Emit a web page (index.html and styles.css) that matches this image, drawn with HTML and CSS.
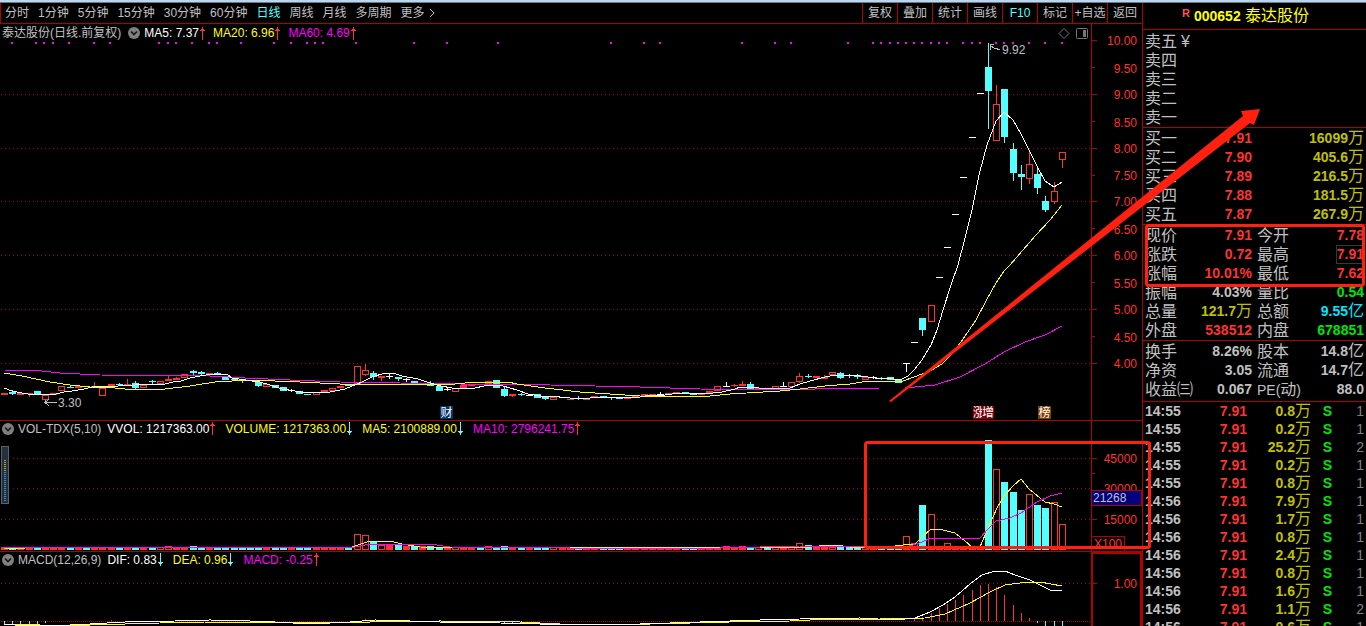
FILE: index.html
```html
<!DOCTYPE html>
<html lang="zh-CN">
<head>
<meta charset="utf-8">
<title>000652 泰达股份</title>
<link rel="stylesheet" href="styles.css">
</head>
<body>
<svg class="defs" aria-hidden="true">
  <symbol id="up" viewBox="0 0 5 13"><path d="M2 0h1v13H2z M1 2h3v1H1z M0 3h5v1H0z" fill="#ff3232"/></symbol>
  <symbol id="down" viewBox="0 0 5 13"><path d="M2 0h1v13H2z M1 10h3v1H1z M0 9h5v1H0z" fill="#54ffff"/></symbol>
  <symbol id="fold" viewBox="0 0 12 12"><circle cx="6" cy="6" r="6" fill="#808080"/><path d="M3 4.5l3 3 3-3" fill="none" stroke="#181818" stroke-width="1.7"/></symbol>
</svg>
<div class="app">
  <div class="window-edge"></div>
  <div class="workspace">
    <main class="charts">
      <nav class="toolbar">
        <div class="periods">
          <button>分时</button><button>1分钟</button><button>5分钟</button><button>15分钟</button><button>30分钟</button><button>60分钟</button><button class="active">日线</button><button>周线</button><button>月线</button><button>多周期</button><button class="more">更多<svg width="6" height="10" viewBox="0 0 6 10"><path d="M1 1l4 4-4 4" fill="none" stroke="#c0c0c0"/></svg></button>
        </div>
        <div class="tools">
          <button>复权</button><button>叠加</button><button>统计</button><button>画线</button><button class="active">F10</button><button>标记</button><button>+自选</button><button>返回</button>
        </div>
      </nav>

      <section class="panel">
        <header class="legend price-legend">
          <span>泰达股份(日线.前复权)</span>
          <svg class="fold"><use href="#fold"/></svg>
          <span class="white">MA5: 7.37<svg class="trend"><use href="#up"/></svg></span>
          <span class="yellow">MA20: 6.96<svg class="trend"><use href="#up"/></svg></span>
          <span class="magenta">MA60: 4.69<svg class="trend"><use href="#up"/></svg></span>
        </header>
        <svg class="plot" viewBox="0 24 1142 396">
          <g class="grid"><path d="M1 94.5H1091M1 148.5H1091M1 201.5H1091M1 255.5H1091M1 309.5H1091M1 363.5H1091"/></g>
          <path class="axis" d="M1091.5 24V420M1092 40.5h5M1092 67.5h3M1092 94.5h5M1092 121.5h3M1092 148.5h5M1092 175.5h3M1092 201.5h5M1092 228.5h3M1092 255.5h5M1092 282.5h3M1092 309.5h5M1092 336.5h3M1092 363.5h5"/>
          <g class="axis-text">
            <text x="1137" y="45">10.00</text><text x="1137" y="73">9.50</text><text x="1137" y="99">9.00</text><text x="1137" y="127">8.50</text><text x="1137" y="153">8.00</text><text x="1137" y="180">7.50</text><text x="1137" y="206">7.00</text><text x="1137" y="234">6.50</text><text x="1137" y="260">6.00</text><text x="1137" y="288">5.50</text><text x="1137" y="314">5.00</text><text x="1137" y="342">4.50</text><text x="1137" y="368">4.00</text>
          </g>
          <g id="events"></g>
          <g id="candles" class="crisp"></g>
          <polyline class="line magenta-line" points="4,370 42,371 60,373 100,375 210,376 245,378 290,380 340,382 400,383 460,384 550,385 640,387 700,389 790,390 815,389 880,388 905,388 935,385 960,377 985,364 1004,352 1025,342 1045,335 1062,326"/>
          <polyline class="line yellow-line" points="4,373 22,376 50,382 70,385 90,387 115,388 125,389 165,389 190,386 215,382 250,380 300,382 340,384 455,384 475,382 508,382 517,384 545,388 580,392 640,396 710,396 730,394 780,391 800,389 825,386 850,384 868,381 903,381 914,377 930,371 942,364 951,355 961,342 976,320 986,301 996,283 1004,271 1010,265 1036,235 1050,220 1062,205"/>
          <polyline class="line white-line" points="4,388 12,391 22,393 28,394 56,394 64,392 72,391 84,389 92,387 100,386 118,386 135,385 165,384 173,382 181,381 190,378 200,376 212,374 228,375 232,378 245,380 260,382 270,385 282,389 295,391 306,393 330,392 345,389 352,386 362,382 372,377 385,373 393,373 402,376 418,379 430,383 441,386 452,388 475,388 484,386 495,385 503,386 517,390 528,394 540,396 560,397 570,398 590,398 605,397 635,398 645,396 665,395 680,393 705,394 722,392 735,389 740,387 752,387 765,389 790,388 800,384 810,381 825,377 835,375 860,376 875,378 893,379 900,380 908,376 914,370 922,360 931,345 937,330 943,310 951,285 958,265 964,242 972,210 979,175 987,145 996,121 1004,112 1013,120 1021,134 1029,150 1037,166 1045,181 1054,187 1062,182"/>
          <path class="pointer" d="M1000 49.5l-5-1-5-3m0 4v-5h4M46 402.5h11M49 399.5l-4 3 4 3M45 400v3"/>
          <g class="note"><text x="1002" y="54">9.92</text><text x="58" y="407">3.30</text></g>
          <g class="badge">
            <rect x="440" y="406" width="13" height="13" fill="#003366"/><text x="446.5" y="417">财</text>
            <rect x="973" y="406" width="21" height="13" fill="#800000"/><text x="979" y="417">涨</text><rect x="982" y="406" width="12" height="13" fill="#800000"/><text x="988" y="417">增</text>
            <rect x="1038" y="406" width="13" height="13" fill="#804000"/><text x="1044.5" y="417">榜</text>
          </g>
          <path d="M1064 28.500l5 5-5 5-5-5z" fill="none" stroke="#777"/>
          <rect x="1076.500" y="28.500" width="11" height="10" rx="1" fill="none" stroke="#777"/><rect x="1083" y="30" width="3" height="7" fill="#777"/>
        </svg>
      </section>

      <section class="panel">
        <header class="legend">
          <svg class="fold"><use href="#fold"/></svg>
          <span>VOL-TDX(5,10)</span>
          <span class="white">VVOL: 1217363.00<svg class="trend"><use href="#up"/></svg></span>
          <span class="yellow">VOLUME: 1217363.00<svg class="trend"><use href="#down"/></svg></span>
          <span class="yellow">MA5: 2100889.00<svg class="trend"><use href="#down"/></svg></span>
          <span class="magenta">MA10: 2796241.75<svg class="trend"><use href="#up"/></svg></span>
        </header>
        <svg class="plot" viewBox="0 421 1142 130">
          <g class="grid"><path d="M13 458.5H1091M13 488.5H1091M1 519.5H1091"/></g>
          <path class="axis" d="M1091.5 421V551M1092 458.5h5M1092 473.500h3M1092 519.5h5"/>
          <g class="axis-text"><text x="1137" y="463">45000</text><text x="1137" y="493">30000</text><text x="1137" y="524">15000</text></g>
          <rect x="1091.5" y="490.5" width="50" height="15" fill="#000080" stroke="#b00000"/>
          <text class="current" x="1093" y="502">21268</text>
          <path class="axis" d="M1092 536.5h32.500v14"/>
          <text class="axis-text start" x="1094" y="548">X100</text>
          <g id="volumes" class="crisp"></g>
          <polyline class="line yellow-line" points="4,548 25,548 90,547 120,547 250,548 352,547 358,545 370,541 390,541 402,544 420,547 500,548 815,547 824,545 836,545 850,547 880,548 903,545 915,544 922,537 931,529 939,529 955,533 965,541 972,547 980,547 988,528 997,508 1004,496 1013,486 1021,479 1029,489 1045,502 1054,504 1062,507"/>
          <polyline class="line magenta-line" points="4,547 350,548 370,544 430,544 450,547 570,548 720,548 800,546 860,546 910,546 922,542 931,538 980,538 988,529 996,521 1010,518 1021,513 1037,502 1050,496 1062,493"/>
          <rect x="1.500" y="446.500" width="7" height="57" fill="#26303c" stroke="#59616b"/>
          <path d="M5 501V471" stroke="#3090d0" stroke-width="2" stroke-dasharray="1 1"/><path d="M5 471V459" stroke="#b0a030" stroke-width="2" stroke-dasharray="1 1"/>
        </svg>
      </section>

      <section class="panel">
        <header class="legend">
          <svg class="fold"><use href="#fold"/></svg>
          <span>MACD(12,26,9)</span>
          <span class="white">DIF: 0.83<svg class="trend"><use href="#down"/></svg></span>
          <span class="yellow">DEA: 0.96<svg class="trend"><use href="#down"/></svg></span>
          <span class="magenta">MACD: -0.25<svg class="trend"><use href="#up"/></svg></span>
        </header>
        <svg class="plot" viewBox="0 552 1142 74">
          <g class="grid"><path d="M1 583.5H1091"/><path class="zero" d="M1 621.5H1091"/></g>
          <path d="M1092 626V553H1141V626" fill="none" stroke="#b00000" stroke-width="2"/>
          <path class="axis" d="M1092 583.5h5"/>
          <text class="axis-text" x="1137" y="588">1.00</text>
          <g id="macd" class="crisp"></g>
          <polyline class="line yellow-line" points="4,624 40,625 90,625 160,623 205,622 300,622 370,622 440,621 520,622 560,624 650,624 730,622 790,621 830,619 880,619 925,618 945,614 970,603 990,592 1005,585 1020,583 1040,582 1062,586"/>
          <polyline class="line white-line" points="4,624 15,625 70,625 90,624 125,622 175,621 210,620 250,621 275,622 310,624 350,622 375,620 410,621 440,622 480,622 500,623 540,624 640,624 700,622 760,620 800,619 860,618 895,620 915,618 930,612 943,605 955,597 970,584 982,575 995,571 1005,571 1015,575 1030,580 1040,585 1050,590 1062,591"/>
        </svg>
      </section>
    </main>

    <aside class="sidebar">
      <h1 class="stock"><sup>R</sup><b>000652</b> 泰达股份</h1>
      <table class="book sell">
        <tr><th>卖五<span class="yen">¥</span></th><td></td><td></td></tr>
        <tr><th>卖四</th><td></td><td></td></tr>
        <tr><th>卖三</th><td></td><td></td></tr>
        <tr><th>卖二</th><td></td><td></td></tr>
        <tr><th>卖一</th><td></td><td></td></tr>
      </table>
      <table class="book">
        <tr><th>买一</th><td class="red">7.91</td><td class="gold">16099<i>万</i></td></tr>
        <tr><th>买二</th><td class="red">7.90</td><td class="gold">405.6<i>万</i></td></tr>
        <tr><th>买三</th><td class="red">7.89</td><td class="gold">216.5<i>万</i></td></tr>
        <tr><th>买四</th><td class="red">7.88</td><td class="gold">181.5<i>万</i></td></tr>
        <tr><th>买五</th><td class="red">7.87</td><td class="gold">267.9<i>万</i></td></tr>
      </table>
      <table class="quote">
        <tr><th>现价</th><td class="red">7.91</td><th>今开</th><td class="red">7.78</td></tr>
        <tr><th>涨跌</th><td class="red">0.72</td><th>最高</th><td class="red"><span class="boxed">7.91</span></td></tr>
        <tr><th>涨幅</th><td class="red">10.01%</td><th>最低</th><td class="red">7.62</td></tr>
        <tr><th>振幅</th><td>4.03%</td><th>量比</th><td class="green">0.54</td></tr>
        <tr><th>总量</th><td class="gold">121.7<i>万</i></td><th>总额</th><td class="blue">9.55<i>亿</i></td></tr>
        <tr><th>外盘</th><td class="red">538512</th><th>内盘</th><td class="green">678851</td></tr>
      </table>
      <table class="quote basics">
        <tr><th>换手</th><td>8.26%</td><th>股本</th><td>14.8<i>亿</i></td></tr>
        <tr><th>净资</th><td>3.05</td><th>流通</th><td>14.7<i>亿</i></td></tr>
        <tr><th>收益㈢</th><td>0.067</td><th><span class="latin">PE(</span>动<span class="latin">)</span></th><td>88.0</td></tr>
      </table>
      <table class="ticks">
        <tr><td>14:55</td><td>7.91</td><td>0.8<i>万</i></td><td>S</td><td>1</td></tr>
        <tr><td>14:55</td><td>7.91</td><td>0.2<i>万</i></td><td>S</td><td>1</td></tr>
        <tr><td>14:55</td><td>7.91</td><td>25.2<i>万</i></td><td>S</td><td>2</td></tr>
        <tr><td>14:55</td><td>7.91</td><td>0.2<i>万</i></td><td>S</td><td>1</td></tr>
        <tr><td>14:55</td><td>7.91</td><td>0.8<i>万</i></td><td>S</td><td>1</td></tr>
        <tr><td>14:56</td><td>7.91</td><td>7.9<i>万</i></td><td>S</td><td>1</td></tr>
        <tr><td>14:56</td><td>7.91</td><td>1.7<i>万</i></td><td>S</td><td>1</td></tr>
        <tr><td>14:56</td><td>7.91</td><td>0.8<i>万</i></td><td>S</td><td>1</td></tr>
        <tr><td>14:56</td><td>7.91</td><td>2.4<i>万</i></td><td>S</td><td>1</td></tr>
        <tr><td>14:56</td><td>7.91</td><td>0.8<i>万</i></td><td>S</td><td>1</td></tr>
        <tr><td>14:56</td><td>7.91</td><td>1.6<i>万</i></td><td>S</td><td>1</td></tr>
        <tr><td>14:56</td><td>7.91</td><td>1.1<i>万</i></td><td>S</td><td>2</td></tr>
        <tr><td>14:56</td><td>7.91</td><td>0.6<i>万</i></td><td>S</td><td>1</td></tr>
      </table>
    </aside>
  </div>
  <svg class="markup" viewBox="0 0 1366 626" aria-hidden="true">
    <path d="M889 401L1243 116L1241 111L1260 109L1254 125L1250 123L891 402Z" fill="#ff2010"/>
    <g fill="none" stroke="#ff2010" stroke-width="3">
      <rect x="865.5" y="442.5" width="284" height="105" rx="2"/>
      <rect x="1146.5" y="225.5" width="217" height="60" rx="2"/>
    </g>
  </svg>
</div>
<script src="chart.js"></script>
</body>
</html>
```

FILE: styles.css
```css
* { box-sizing: border-box; }
body {
  margin: 0;
  background: #000;
  color: #c0c0c0;
  font: 12px/16px "Liberation Sans", "Noto Sans CJK SC", sans-serif;
}
.defs { position: absolute; width: 0; height: 0; }
.app {
  position: relative;
  display: flex;
  flex-direction: column;
  height: 100vh;
  overflow: hidden;
}
.window-edge {
  flex: none;
  height: 3px;
  background: #b9d6f2;
  border-bottom: 1px solid #777;
}
.workspace {
  flex: 1;
  min-height: 0;
  display: grid;
  grid-template-columns: minmax(0, 1fr) 224px;
}

/* Toolbar */
.toolbar {
  display: flex;
  justify-content: space-between;
  height: 21px;
  border-bottom: 1px solid #b00000;
  border-left: 1px solid #b00000;
}
.toolbar button {
  padding: 0;
  border: 0;
  background: none;
  color: inherit;
  font: inherit;
  white-space: nowrap;
}
.toolbar .active { color: #54ffff; }
.periods { display: flex; gap: 9px; padding-left: 4px; }
.more { display: flex; align-items: center; gap: 4px; }
.tools { display: flex; }
.tools button { width: 35px; border-left: 1px solid #b00000; }

/* Chart panels */
.panel { display: grid; }
.panel + .panel { border-top: 1px solid #b00000; }
.legend, .plot { grid-area: 1 / 1; }
.legend {
  z-index: 1;
  align-self: start;
  display: flex;
  align-items: center;
  gap: 10px;
  height: 15px;
  padding-left: 2px;
  white-space: nowrap;
}
.legend span { display: flex; align-items: center; gap: 1px; }
.legend .fold { width: 12px; height: 12px; margin-right: -6px; }
.legend .white { margin-left: -4px; }
.price-legend { gap: 8px; height: 18px; }
.price-legend .fold { margin: 0 0 0 -1px; }
.trend { width: 5px; height: 13px; }
.plot { display: block; width: 100%; height: auto; }
.white { color: #fff; }
.yellow { color: #ff0; }
.magenta { color: #f0f; }
.crisp, .grid, .axis, .line, .pointer { shape-rendering: crispEdges; }
.grid path { stroke: #b00000; stroke-dasharray: 1 3; }
.grid .zero { stroke-dasharray: 1 1; }
.axis { fill: none; stroke: #b00000; }
.axis-text { fill: #ff3232; text-anchor: end; }
.start { text-anchor: start; }
.current, .note { fill: #c0c0c0; }
.pointer { fill: none; stroke: #c0c0c0; }
.line { fill: none; }
.white-line { stroke: #fff; }
.yellow-line { stroke: #ff0; }
.magenta-line { stroke: #f0f; }
.badge text { fill: #fff; text-anchor: middle; }
.rise { fill: #ff3232; }
.hollow { fill: #000; stroke: #ff3232; }
.fall { fill: #54ffff; }
.flat { fill: #fff; }
.event { fill: #f0f; }

/* Quote sidebar */
.sidebar { border-left: 1px solid #b00000; overflow: hidden; }
.stock {
  height: 26px;
  margin: 0;
  padding-left: 39px;
  color: #ff0;
  font-size: 16px;
  font-weight: 400;
  line-height: 26px;
}
.stock b { font-size: 14px; }
.stock sup {
  margin-right: 4px;
  color: #ff5050;
  font-size: 11px;
  font-weight: 700;
  line-height: 1;
  vertical-align: 4px;
}
table {
  width: 100%;
  table-layout: fixed;
  border-collapse: separate;
  border-spacing: 0;
  border-top: 1px solid #b00000;
  padding: 1px 2px 0;
}
th, td {
  height: 19px;
  padding: 0;
  font-size: 14px;
  line-height: 19px;
  white-space: nowrap;
}
th { font-size: 16px; font-weight: 400; text-align: left; }
td { font-weight: 700; text-align: right; }
i { font-size: 16px; font-style: normal; font-weight: 400; line-height: 1; }
.sell { padding: 2px 2px 0; }
.yen { margin-left: 4px; }
.book th { width: 50px; }
.book td:nth-child(2) { width: 57px; }
.quote th { width: 50px; }
.quote td:nth-child(2) { width: 57px; }
.quote th:nth-child(3) { width: 51px; padding-left: 5px; }
.basics { padding-bottom: 2px; }
.latin { font-size: 14px; line-height: 1; }
.boxed { display: inline-block; margin-right: -1px; padding: 0 1px; outline: 1px solid #383838; outline-offset: -1px; line-height: 19px; }
.red { color: #ff3232; }
.gold { color: #c0c000; }
.green { color: #00e600; }
.blue { color: #00e6ff; }
.ticks { padding-top: 0; }
.ticks td { height: 18px; line-height: 18px; }
.ticks td:nth-child(1) { width: 46px; text-align: left; }
.ticks td:nth-child(2) { width: 56px; color: #ff3232; }
.ticks td:nth-child(3) { width: 64px; color: #c0c000; }
.ticks td:nth-child(4) { width: 21px; color: #00e600; }
.ticks td:nth-child(5) { color: #808080; font-weight: 400; }

/* Hand-drawn highlights over the whole screen */
.markup {
  position: absolute;
  inset: 0;
  width: 100%;
  height: auto;
  pointer-events: none;
}
```

FILE: chart.js
```js
// Each candle: kind, body top, body bottom, wick top, wick bottom.
// r = filled red, h = hollow red, c = cyan, w = flat white.
const candles = `r393,395 c392,394,390,395 r393,395 r393,394,393,397 c391,394 h395,400 r393,395 h386,391 c387,388,385,388 r386,388
c386,387 r386,387,382,387 h388,396 r384,386 c384,385,383,386 r384,386,379,386 c383,388,381,389 h385,388 c381,382,380,384 h381,384
r379,381,376,381 r378,380,377,380 h374,378 c371,373,370,375 c372,374,371,375 r373,375 c373,374,372,374 c376,380 c379,380 c379,380,379,383
c380,381 c382,386,381,387 h384,387 c385,388 c387,391 w390,391,389,392 c391,394 c394,395 h392,395 r390,392
h388,391 r386,388 c384,386 h366,384 h370,375,364,376 c373,377,371,380 h376,378,376,381 w376,377,373,379 c377,379,377,381 w379,380,378,382
c381,384 r384,385 c383,386,381,386 c386,391 w389,390,387,391 h388,392 r385,388 r384,386 c384,385 h381,384
c380,388 c389,396,387,397 r394,396,394,397 c394,395,393,396 w395,396 c394,398 c397,399,397,400 h397,400 w397,398 r399,400
c398,399,396,400 h398,400 r396,397 c396,397 c397,398,397,400 c398,399 r398,399 h396,398 h394,396 r394,395
w394,395,392,395 r393,394 r392,393 c392,393 c394,395 r393,395 r391,393 h386,391 w386,387,382,387 r385,386,384,387
r384,386,381,386 c384,390,382,390 h388,390 c389,390 h386,389 w386,387,382,387 h382,387 h376,382,373,383 c376,377,374,378 r376,378
r377,379,375,379 h372,375 c373,378,372,379 c375,376,374,378 c375,377,374,379 h377,380 w377,378,376,379 c378,379,377,380 c377,380 c380,383
w363,364,363,372 w342,343 c318,330,318,336 h305,322 w277,278 w247,248 w214,215 w177,178 w137,138 w93,94
c67,91,43,129 h104,141,85,141 c89,137,89,143 c149,173,143,181 c174,177,165,190 h164,179,151,184 c174,188,168,194 c201,210,196,212 h191,202,182,204 h152,160,152,168`
  .split(/\s+/)
  .map(s => ({ kind: s[0], y: s.slice(1).split(',').map(Number) }));

const volumes = {
  20: 546, 23: 546, 43: 534, 44: 535, 45: 541, 46: 545, 47: 545, 48: 545, 49: 546,
  50: 546, 51: 546, 52: 546, 59: 546, 61: 546, 88: 546, 90: 546, 97: 543, 98: 545,
  110: 536, 111: 543, 112: 505, 113: 514, 115: 543,
  120: 440, 121: 469, 122: 482, 123: 492, 124: 510, 125: 494, 126: 505, 127: 508, 128: 502, 129: 524
};
const hollowVolume = [19, 20, 43, 44, 46, 97, 110, 111, 113, 115, 121, 125, 128, 129];
const smallHollow = i => candles[i].kind === 'h' && i > 46;

const histogram = {
  111: 619, 112: 617, 113: 613, 114: 608, 115: 604, 116: 600, 117: 595, 118: 590, 119: 585,
  120: 584, 121: 587, 122: 595, 123: 605, 124: 613, 125: 618, 126: 623, 127: 626, 128: 626, 129: 626,
  0: 624, 1: 624, 2: 624, 3: 624, 4: 624, 5: 623, 13: 620, 44: 619, 60: 623, 61: 624, 62: 624, 63: 623
};

const eventDays = [12, 36, 44, 53, 69, 94, 110, 159, 168, 176, 192, 209, 217, 241, 274, 291, 307, 315, 323, 356,
  414, 447, 498, 611, 644, 660, 742, 775, 791, 848, 873, 881, 890, 898, 906, 914, 922, 931, 939, 947, 963, 972,
  980, 996, 1004, 1013, 1029, 1045, 1062];

const styleOf = { r: 'rise', h: 'hollow', c: 'fall', w: 'flat' };
const xOf = i => Math.round(4 + i * 8.2);

function rect(parent, cls, x, y, width, height) {
  const el = document.createElementNS('http://www.w3.org/2000/svg', 'rect');
  const values = { class: cls, x, y, width, height };
  for (const key in values) el.setAttribute(key, values[key]);
  document.getElementById(parent).append(el);
}

function body(parent, cls, x, top, bottom) {
  if (cls === 'hollow') rect(parent, cls, x - 2.5, top + 0.5, 6, Math.max(1, bottom - top - 1));
  else rect(parent, cls, x - 3, top, 7, bottom - top);
}

candles.forEach(({ kind, y: [top, bottom, high, low] }, i) => {
  const x = xOf(i);
  if (high !== undefined) rect('candles', kind === 'h' ? 'rise' : styleOf[kind], x, high, 1, low - high);
  body('candles', styleOf[kind], x, top, bottom);

  const up = kind === 'r' || kind === 'h' || kind === 'w';
  const cls = hollowVolume.includes(i) || smallHollow(i) ? 'hollow' : up ? 'rise' : 'fall';
  body('volumes', cls, x, volumes[i] || 547, 550);
});

for (const i in histogram) {
  const y = histogram[i];
  rect('macd', y < 621 ? 'rise' : 'fall', xOf(i), Math.min(y, 621), 1, Math.abs(621 - y));
}

eventDays.forEach(x => rect('events', 'event', x - 1, 42, 2, 2));
```
